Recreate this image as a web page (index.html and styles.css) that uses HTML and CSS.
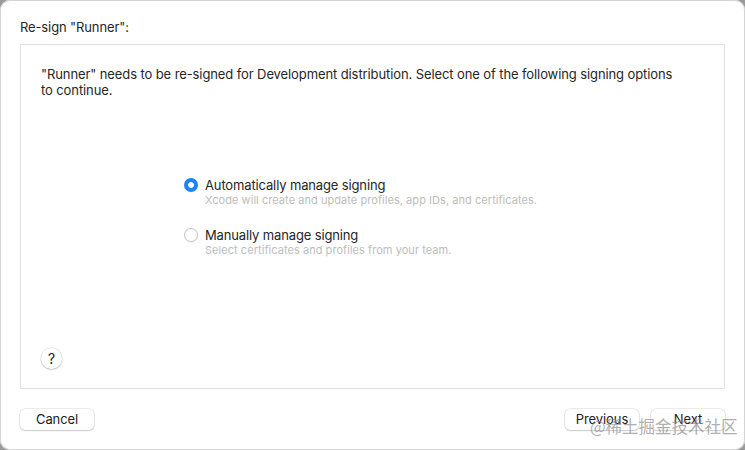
FILE: index.html
```html
<!DOCTYPE html>
<html>
<head>
<meta charset="utf-8">
<link rel="stylesheet" href="styles.css">
</head>
<body>
<div class="window">
  <div class="title">Re-sign "Runner":</div>
  <div class="panel">
    <p class="intro">"Runner" needs to be re-signed for Development distribution. Select one of the following signing options to continue.</p>
    <div class="options">
      <div class="option">
        <span class="radio on"></span>
        <div class="texts">
          <div class="label">Automatically manage signing</div>
          <div class="sub">Xcode will create and update profiles, app IDs, and certificates.</div>
        </div>
      </div>
      <div class="option">
        <span class="radio"></span>
        <div class="texts">
          <div class="label">Manually manage signing</div>
          <div class="sub">Select certificates and profiles from your team.</div>
        </div>
      </div>
    </div>
    <div class="help">?</div>
  </div>
  <div class="footer">
    <button class="btn">Cancel</button>
    <div class="spacer"></div>
    <button class="btn">Previous</button>
    <button class="btn">Next</button>
  </div>
  <div class="watermark">@稀土掘金技术社区</div>
</div>
</body>
</html>
```
FILE: styles.css
```css
html, body {
  margin: 0;
  padding: 0;
  background: #9a9a9a;
}
body {
  width: 745px;
  height: 450px;
  overflow: hidden;
  font-family: Inter, "Liberation Sans", "Noto Sans CJK SC", sans-serif;
  color: #262626;
}
.window {
  position: relative;
  box-sizing: border-box;
  width: 745px;
  height: 450px;
  background: #ffffff;
  border-radius: 10px;
  box-shadow: inset 0 0 0 1px #d4d4d4;
  padding: 19px 20px 0 20px;
  display: flex;
  flex-direction: column;
}
.title {
  font-size: 13px;
  line-height: 16px;
  height: 16px;
  letter-spacing: -0.12px;
}
.panel {
  margin-top: 9px;
  height: 345px;
  box-sizing: border-box;
  border: 1px solid #e2e2e2;
  padding: 21px 20px 19px 20px;
  display: flex;
  flex-direction: column;
}
.intro {
  margin: 0;
  font-size: 13px;
  line-height: 16px;
  width: 636px;
  letter-spacing: -0.1px;
}
.options {
  margin-top: 79px;
  margin-left: 143px;
  display: flex;
  flex-direction: column;
  gap: 20px;
}
.option {
  display: flex;
  align-items: flex-start;
  gap: 7px;
}
.radio {
  box-sizing: border-box;
  width: 14px;
  height: 14px;
  border-radius: 50%;
  border: 1px solid #c6c6c6;
  background: #fff;
  margin-top: 1px;
  flex: none;
  box-shadow: 0 0.5px 1px rgba(0,0,0,0.08);
}
.radio.on {
  border: none;
  background: radial-gradient(circle, #ffffff 0 2.6px, #1b84fb 3.2px);
}
.label {
  font-size: 13px;
  line-height: 16px;
  letter-spacing: -0.14px;
}
.sub {
  font-size: 11px;
  line-height: 14px;
  color: #bdbdbd;
  letter-spacing: 0.05px;
}
.help {
  margin-top: auto;
  box-sizing: border-box;
  width: 21px;
  height: 21px;
  border-radius: 50%;
  background: #fff;
  box-shadow: 0 0 0 0.5px rgba(0,0,0,0.12), 0 1px 1.5px rgba(0,0,0,0.18);
  font-size: 14px;
  line-height: 21px;
  text-align: center;
  color: #222;
}
.footer {
  margin-top: 20px;
  display: flex;
  gap: 12px;
}
.spacer {
  flex: 1;
}
.btn {
  font-family: Inter, "Liberation Sans", sans-serif;
  font-size: 13px;
  color: #222;
  height: 21px;
  width: 74px;
  padding: 0 0 1px 0;
  background: #fff;
  border: none;
  border-radius: 5px;
  letter-spacing: -0.1px;
  box-shadow: 0 0 0 0.5px rgba(0,0,0,0.16), 0 1px 1.5px rgba(0,0,0,0.14);
}
.watermark {
  position: absolute;
  left: 590px;
  top: 416px;
  font-size: 16.5px;
  line-height: 20px;
  color: rgba(140,140,140,0.7);
  font-family: "Noto Sans CJK SC", sans-serif;
  white-space: nowrap;
}
```
